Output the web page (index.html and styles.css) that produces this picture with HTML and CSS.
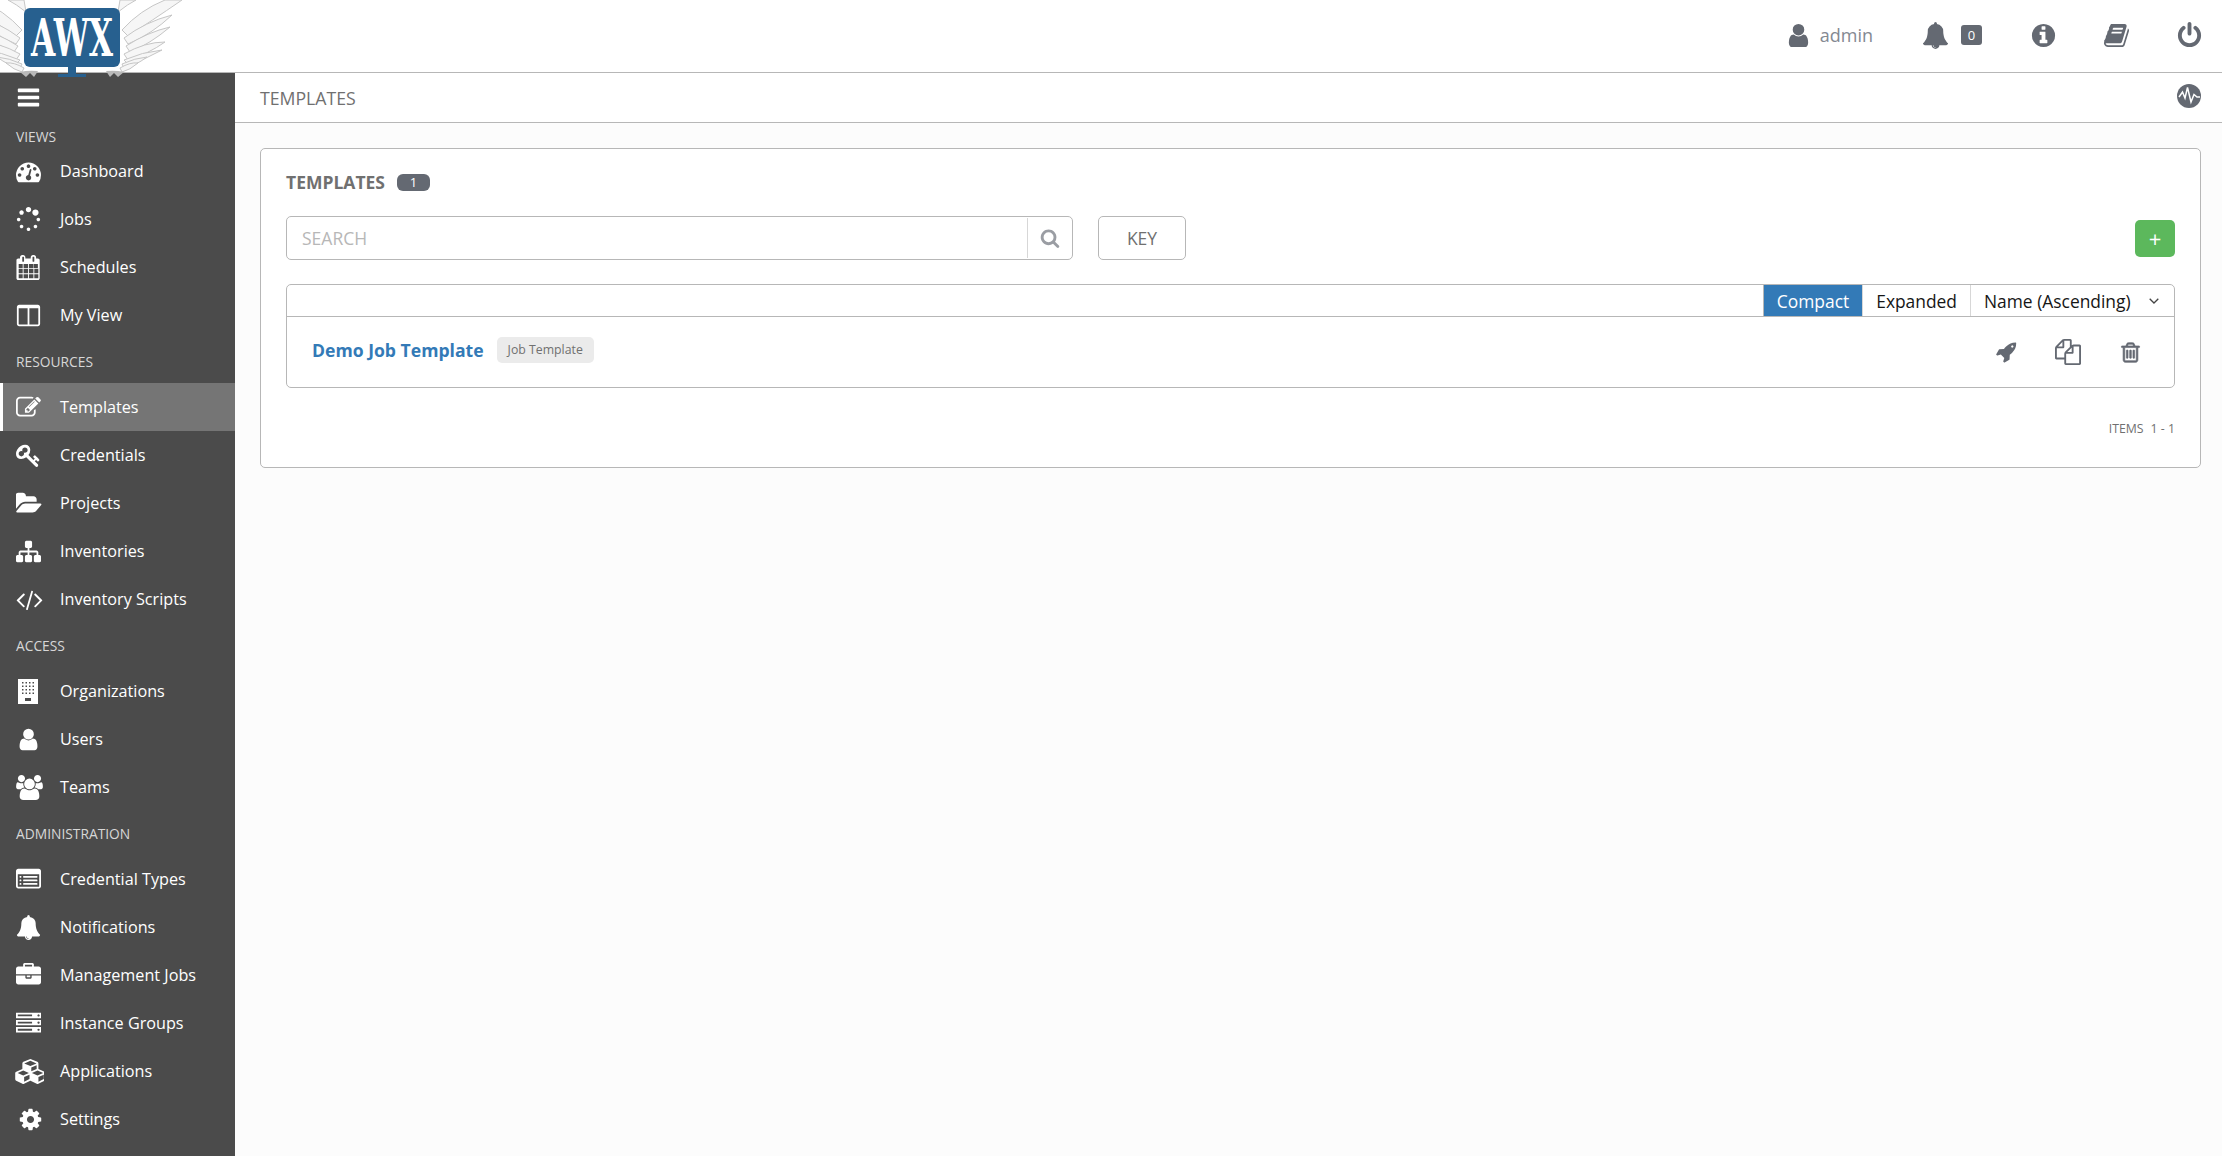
FILE: index.html
```html
<!DOCTYPE html>
<html lang="en">
<head>
<meta charset="utf-8">
<title>AWX Templates</title>
<link rel="stylesheet" href="styles.css">
</head>
<body>
<svg class="logo" viewBox="0 0 190 78" width="190" height="78" aria-label="AWX">
  <defs>
    <g id="wing" fill="#f6f6f6" stroke="#c6c6c6" stroke-width="1">
      <path d="M118 12Q128 4 136 0L120 0Z"/>
      <path d="M122 30Q140 10 165 0L182 0Q150 22 128 36Z"/>
      <path d="M124 38Q145 22 172 15Q152 34 128 44Z"/>
      <path d="M126 46Q148 32 170 27Q150 44 130 52Z"/>
      <path d="M124 54Q145 42 165 42Q148 54 128 60Z"/>
      <path d="M124 60Q142 52 162 50Q145 60 128 64Z"/>
      <path d="M122 64Q135 58 147 57Q135 66 124 68Z"/>
      <path d="M120 68Q130 62 138 63Q130 70 122 72Z"/>
      <path class="wing-tip" d="M106 71Q116 70 124 72L118 77L114 73L110 77Z"/>
    </g>
  </defs>
  <use href="#wing"/>
  <use href="#wing" transform="matrix(-1 0 0 1 144 0)"/>
  <rect x="24" y="8" width="96" height="59" rx="6" fill="#27608f"/>
  <rect x="68" y="66" width="8" height="9" fill="#27608f"/>
  <rect x="58" y="74" width="28" height="3" fill="#27608f"/>
  <text class="logo-text" x="72" y="56" text-anchor="middle" textLength="82" lengthAdjust="spacingAndGlyphs">AWX</text>
</svg>
<header class="topbar">
  <a class="top-item user"><svg class="ic-top" viewBox="0 0 1792 1792"><path d="M1536 1399q0 109-62.5 187t-150.5 78h-854q-88 0-150.5-78t-62.5-187q0-85 8.5-160.5t31.5-152 58.5-131 94-89 134.5-34.5q131 128 313 128t313-128q76 0 134.5 34.5t94 89 58.5 131 31.5 152 8.5 160.5zm-256-887q0 159-112.5 271.5t-271.5 112.5-271.5-112.5-112.5-271.5 112.5-271.5 271.5-112.5 271.5 112.5 112.5 271.5z"/></svg><span>admin</span></a>
  <a class="top-item bell"><svg class="ic-top" viewBox="0 0 1792 1792"><path d="M912 1696q0-16-16-16-59 0-101.5-42.5t-42.5-101.5q0-16-16-16t-16 16q0 73 51.5 124.5t124.5 51.5q16 0 16-16zm816-288q0 52-38 90t-90 38h-448q0 106-75 181t-181 75-181-75-75-181h-448q-52 0-90-38t-38-90q50-42 91-88t85-119.5 74.5-158.5 50-206 19.5-260q0-152 117-282.5t307-158.5q-8-19-8-39 0-40 28-68t68-28 68 28 28 68q0 20-8 39 190 28 307 158.5t117 282.5q0 139 19.5 260t50 206 74.5 158.5 85 119.5 91 88z"/></svg><b class="count">0</b></a>
  <a class="top-item info"><svg class="ic-top" viewBox="0 0 1792 1792"><path d="M1152 1376v-160q0-14-9-23t-23-9h-96v-512q0-14-9-23t-23-9h-320q-14 0-23 9t-9 23v160q0 14 9 23t23 9h96v320h-96q-14 0-23 9t-9 23v160q0 14 9 23t23 9h448q14 0 23-9t9-23zm-128-896v-160q0-14-9-23t-23-9h-192q-14 0-23 9t-9 23v160q0 14 9 23t23 9h192q14 0 23-9t9-23zm640 416q0 209-103 385.5t-279.5 279.5-385.5 103-385.5-103-279.5-279.5-103-385.5 103-385.5 279.5-279.5 385.5-103 385.5 103 279.5 279.5 103 385.5z"/></svg></a>
  <a class="top-item book"><svg class="ic-top" viewBox="0 0 1792 1792"><path d="M1703 478q40 57 18 129l-275 906q-19 64-76.5 107.5t-122.5 43.5h-923q-77 0-148.5-53.5t-99.5-131.5q-24-67-2-127 0-4 3-27t4-37q1-8-3-21.5t-3-19.5q2-11 8-21t16.5-23.5 16.5-23.5q23-38 45-91.5t30-91.5q3-10 .5-30t-.5-28q3-11 17-28t17-23q21-36 42-92t25-90q1-9-2.5-32t.5-28q4-13 22-30.5t22-22.5q19-26 42.5-84.5t27.5-96.5q1-8-3-25.5t-2-26.5q2-8 9-18t18-23 17-21q8-12 16.5-30.5t15-35 16-36 19.5-32 26.5-23.5 36-11.5 47.5 5.5l-1 3q38-9 51-9h761q74 0 114 56t18 130l-274 906q-36 119-71.5 153.5t-128.5 34.5h-869q-27 0-38 15-11 16-1 43 24 70 144 70h923q29 0 56-15.5t35-41.5l300-987q7-22 5-57 38 15 59 43zm-1064 2q-4 13 2 22.5t20 9.5h608q13 0 25.5-9.5t16.5-22.5l21-64q4-13-2-22.5t-20-9.5h-608q-13 0-25.5 9.5t-16.5 22.5zm-83 256q-4 13 2 22.5t20 9.5h608q13 0 25.5-9.5t16.5-22.5l21-64q4-13-2-22.5t-20-9.5h-608q-13 0-25.5 9.5t-16.5 22.5z"/></svg></a>
  <a class="top-item power"><svg class="ic-top" viewBox="0 0 1792 1792"><path d="M1664 896q0 156-61 298t-164 245-245 164-298 61-298-61-245-164-164-245-61-298q0-182 80.5-343t226.5-270q43-32 95.5-25t83.5 50q32 42 24.5 94.5t-49.5 84.5q-98 74-151.5 181t-53.5 228q0 104 40.5 198.5t109.5 163.5 163.5 109.5 198.5 40.5 198.5-40.5 163.5-109.5 109.5-163.5 40.5-198.5q0-121-53.5-228t-151.5-181q-42-32-49.5-84.5t24.5-94.5q31-43 84-50t95 25q146 109 226.5 270t80.5 343zm-640-768v640q0 52-38 90t-90 38-90-38-38-90v-640q0-52 38-90t90-38 90 38 38 90z"/></svg></a>
</header>
<div class="shell">
  <nav class="sidebar">
    <div class="burger"><svg class="ic" viewBox="0 0 1792 1792"><path d="M1664 1344v128q0 26-19 45t-45 19h-1408q-26 0-45-19t-19-45v-128q0-26 19-45t45-19h1408q26 0 45 19t19 45zm0-512v128q0 26-19 45t-45 19h-1408q-26 0-45-19t-19-45v-128q0-26 19-45t45-19h1408q26 0 45 19t19 45zm0-512v128q0 26-19 45t-45 19h-1408q-26 0-45-19t-19-45v-128q0-26 19-45t45-19h1408q26 0 45 19t19 45z"/></svg></div>
    <div class="group-label first">VIEWS</div>
    <a class="nav-item"><span class="nav-icon"><svg class="ic" viewBox="0 0 1792 1792"><path d="M384 1152q0-53-37.5-90.5t-90.5-37.5-90.5 37.5-37.5 90.5 37.5 90.5 90.5 37.5 90.5-37.5 37.5-90.5zm192-448q0-53-37.5-90.5t-90.5-37.5-90.5 37.5-37.5 90.5 37.5 90.5 90.5 37.5 90.5-37.5 37.5-90.5zm428 481l101-382q6-26-7.5-48.5t-38.5-29.5-48 6.5-30 39.5l-101 382q-60 5-107 43.5t-63 98.5q-20 77 20 146t117 89 146-20 89-117q16-60-6-117t-72-91zm660-33q0-53-37.5-90.5t-90.5-37.5-90.5 37.5-37.5 90.5 37.5 90.5 90.5 37.5 90.5-37.5 37.5-90.5zm-640-640q0-53-37.5-90.5t-90.5-37.5-90.5 37.5-37.5 90.5 37.5 90.5 90.5 37.5 90.5-37.5 37.5-90.5zm448 192q0-53-37.5-90.5t-90.5-37.5-90.5 37.5-37.5 90.5 37.5 90.5 90.5 37.5 90.5-37.5 37.5-90.5zm320 448q0 261-141 483-19 29-54 29h-1402q-35 0-54-29-141-221-141-483 0-182 71-348t191-286 286-191 348-71 348 71 286 191 191 286 71 348z"/></svg></span>Dashboard</a>
    <a class="nav-item"><span class="nav-icon"><svg class="ic" viewBox="0 0 1792 1792"><path d="M526 1394q0 53-37.5 90.5t-90.5 37.5q-52 0-90-38t-38-90q0-53 37.5-90.5t90.5-37.5 90.5 37.5 37.5 90.5zm498 206q0 53-37.5 90.5t-90.5 37.5-90.5-37.5-37.5-90.5 37.5-90.5 90.5-37.5 90.5 37.5 37.5 90.5zm-704-704q0 53-37.5 90.5t-90.5 37.5-90.5-37.5-37.5-90.5 37.5-90.5 90.5-37.5 90.5 37.5 37.5 90.5zm1202 498q0 52-38 90t-90 38q-53 0-90.5-37.5t-37.5-90.5 37.5-90.5 90.5-37.5 90.5 37.5 37.5 90.5zm-964-996q0 66-47 113t-113 47-113-47-47-113 47-113 113-47 113 47 47 113zm1170 498q0 53-37.5 90.5t-90.5 37.5-90.5-37.5-37.5-90.5 37.5-90.5 90.5-37.5 90.5 37.5 37.5 90.5zm-640-704q0 80-56 136t-136 56-136-56-56-136 56-136 136-56 136 56 56 136zm530 206q0 93-66 158.5t-158 65.5q-93 0-158.5-65.5t-65.5-158.5q0-92 65.5-158t158.5-66q92 0 158 66t66 158z"/></svg></span>Jobs</a>
    <a class="nav-item"><span class="nav-icon"><svg class="ic" viewBox="0 0 1792 1792"><path d="M192 1664h288v-288h-288v288zm352 0h320v-288h-320v288zm-352-352h288v-320h-288v320zm352 0h320v-320h-320v320zm-352-384h288v-288h-288v288zm736 736h320v-288h-320v288zm-384-736h320v-288h-320v288zm768 736h288v-288h-288v288zm-384-352h320v-320h-320v320zm-352-864v-288q0-13-9.5-22.5t-22.5-9.5h-64q-13 0-22.5 9.5t-9.5 22.5v288q0 13 9.5 22.5t22.5 9.5h64q13 0 22.5-9.5t9.5-22.5zm736 864h288v-320h-288v320zm-384-384h320v-288h-320v288zm352 0h288v-288h-288v288zm32-480v-288q0-13-9.5-22.5t-22.5-9.5h-64q-13 0-22.5 9.5t-9.5 22.5v288q0 13 9.5 22.5t22.5 9.5h64q13 0 22.5-9.5t9.5-22.5zm384-64v1280q0 52-38 90t-90 38h-1408q-52 0-90-38t-38-90v-1280q0-52 38-90t90-38h128v-96q0-66 47-113t113-47h64q66 0 113 47t47 113v96h384v-96q0-66 47-113t113-47h64q66 0 113 47t47 113v96h128q52 0 90 38t38 90z"/></svg></span>Schedules</a>
    <a class="nav-item"><span class="nav-icon"><svg class="ic" viewBox="0 0 1792 1792"><path d="M224 1536h608v-1152h-640v1120q0 13 9.5 22.5t22.5 9.5zm1376-32v-1120h-640v1152h608q13 0 22.5-9.5t9.5-22.5zm128-1216v1216q0 66-47 113t-113 47h-1344q-66 0-113-47t-47-113v-1216q0-66 47-113t113-47h1344q66 0 113 47t47 113z"/></svg></span>My View</a>
    <div class="group-label">RESOURCES</div>
    <a class="nav-item active"><span class="nav-icon"><svg class="ic" viewBox="0 0 1792 1792"><path d="M888 1184l116-116-152-152-116 116v56h96v96h56zm440-720q-16-16-33 1l-350 350q-17 17-1 33t33-1l350-350q17-17 1-33zm80 594v190q0 119-84.5 203.5t-203.5 84.5h-832q-119 0-203.5-84.5t-84.5-203.5v-832q0-119 84.5-203.5t203.5-84.5h832q63 0 117 25 15 7 18 23 3 17-9 29l-49 49q-14 14-32 8-23-6-45-6h-832q-66 0-113 47t-47 113v832q0 66 47 113t113 47h832q66 0 113-47t47-113v-126q0-13 9-22l64-64q15-15 35-7t20 29zm-96-738l288 288-672 672h-288v-288zm444 132l-92 92-288-288 92-92q28-28 68-28t68 28l152 152q28 28 28 68t-28 68z"/></svg></span>Templates</a>
    <a class="nav-item"><span class="nav-icon"><svg class="ic" viewBox="0 0 1792 1792"><path d="M832 512q0-80-56-136t-136-56-136 56-56 136q0 42 19 83-41-19-83-19-80 0-136 56t-56 136 56 136 136 56 136-56 56-136q0-42-19-83 41 19 83 19 80 0 136-56t56-136zm851 704q0 17-49 66t-66 49q-9 0-28.5-16t-36.5-33-38.5-40-24.5-26l-96 96 220 220q28 28 28 68 0 42-39 81t-81 39q-40 0-68-28l-671-671q-176 131-365 131-163 0-265.5-102.5t-102.5-265.5q0-160 95-313t248-248 313-95q163 0 265.5 102.5t102.5 265.5q0 189-131 365l355 355 96-96q-3-3-26-24.5t-40-38.5-33-36.5-16-28.5q0-17 49-66t66-49q13 0 23 10 6 6 46 44.5t82 79.5 86.5 86 73 78 28.5 41z"/></svg></span>Credentials</a>
    <a class="nav-item"><span class="nav-icon"><svg class="ic w1920" viewBox="0 0 1920 1792"><path d="M1815 952q0 31-31 66l-336 396q-43 51-120.5 86.5t-143.5 35.5h-1088q-34 0-60.5-13t-26.5-43q0-31 31-66l336-396q43-51 120.5-86.5t143.5-35.5h1088q34 0 60.5 13t26.5 43zm-343-344v160h-832q-94 0-197 47.5t-164 119.5l-337 396-5 6q0-4-.5-12.5t-.5-12.5v-960q0-92 66-158t158-66h320q92 0 158 66t66 158v32h544q92 0 158 66t66 158z"/></svg></span>Projects</a>
    <a class="nav-item"><span class="nav-icon"><svg class="ic" viewBox="0 0 1792 1792"><path d="M1792 1248v320q0 40-28 68t-68 28h-320q-40 0-68-28t-28-68v-320q0-40 28-68t68-28h96v-192h-512v192h96q40 0 68 28t28 68v320q0 40-28 68t-68 28h-320q-40 0-68-28t-28-68v-320q0-40 28-68t68-28h96v-192h-512v192h96q40 0 68 28t28 68v320q0 40-28 68t-68 28h-320q-40 0-68-28t-28-68v-320q0-40 28-68t68-28h96v-192q0-52 38-90t90-38h512v-192h-96q-40 0-68-28t-28-68v-320q0-40 28-68t68-28h320q40 0 68 28t28 68v320q0 40-28 68t-68 28h-96v192h512q52 0 90 38t38 90v192h96q40 0 68 28t28 68z"/></svg></span>Inventories</a>
    <a class="nav-item"><span class="nav-icon"><svg class="ic w1920" viewBox="0 0 1920 1792"><path d="M617 1399l-50 50q-10 10-23 10t-23-10l-466-466q-10-10-10-23t10-23l466-466q10-10 23-10t23 10l50 50q10 10 10 23t-10 23l-393 393 393 393q10 10 10 23t-10 23zm591-1067l-373 1291q-4 13-15.5 19.5t-23.5 2.5l-62-17q-13-4-19.5-15.5t-2.5-24.5l373-1291q4-13 15.5-19.5t23.5-2.5l62 17q13 4 19.5 15.5t2.5 24.5zm657 651l-466 466q-10 10-23 10t-23-10l-50-50q-10-10-10-23t10-23l393-393-393-393q-10-10-10-23t10-23l50-50q10-10 23-10t23 10l466 466q10 10 10 23t-10 23z"/></svg></span>Inventory Scripts</a>
    <div class="group-label">ACCESS</div>
    <a class="nav-item"><span class="nav-icon"><svg class="ic building" viewBox="0 0 20 25"><path fill-rule="evenodd" d="M0 0h20v25H0zM4 3v1.5h1.5V3zM7.5 3v1.5H9V3zM11 3v1.5h1.5V3zM14.500 3v1.500H16V3zM4 6.500V8h1.500V6.500zM7.500 6.500V8H9V6.500zM11 6.500V8h1.500V6.500zM14.500 6.500V8H16V6.500zM4 10v1.500h1.500V10zM7.500 10v1.500H9V10zM11 10v1.500h1.500V10zM14.500 10v1.500H16V10zM4 13.500V15h1.500v-1.500zM7.500 13.500V15H9v-1.500zM11 13.500V15h1.500v-1.500zM14.500 13.500V15H16v-1.500zM7 19v3h6v-3z"/></svg></span>Organizations</a>
    <a class="nav-item"><span class="nav-icon"><svg class="ic" viewBox="0 0 1792 1792"><path d="M1536 1399q0 109-62.5 187t-150.5 78h-854q-88 0-150.5-78t-62.5-187q0-85 8.500-160.500t31.500-152 58.500-131 94-89 134.500-34.500q131 128 313 128t313-128q76 0 134.500 34.500t94 89 58.500 131 31.500 152 8.500 160.500zm-256-887q0 159-112.500 271.500t-271.500 112.500-271.500-112.500-112.500-271.500 112.500-271.500 271.500-112.500 271.500 112.500 112.500 271.500z"/></svg></span>Users</a>
    <a class="nav-item"><span class="nav-icon"><svg class="ic w1920" viewBox="0 0 1920 1792"><path d="M593 896q-162 5-265 128h-134q-82 0-138-40.500t-56-118.500q0-353 124-353 6 0 43.500 21t97.500 42.500 119 21.500q67 0 133-23-5 37-5 66 0 139 81 256zm1071 637q0 120-73 189.500t-194 69.500h-874q-121 0-194-69.500t-73-189.500q0-53 3.500-103.500t14-109 26.500-108.500 43-97.500 62-81 85.500-53.500 111.500-20q10 0 43 21.500t73 48 107 48 135 21.500 135-21.500 107-48 73-48 43-21.500q61 0 111.500 20t85.500 53.500 62 81 43 97.500 26.500 108.500 14 109 3.500 103.500zm-1024-1277q0 106-75 181t-181 75-181-75-75-181 75-181 181-75 181 75 75 181zm704 384q0 159-112.500 271.500t-271.500 112.500-271.500-112.500-112.500-271.500 112.500-271.500 271.500-112.500 271.500 112.500 112.500 271.500zm576 225q0 78-56 118.500t-138 40.500h-134q-103-123-265-128 81-117 81-256 0-29-5-66 66 23 133 23 59 0 119-21.500t97.500-42.500 43.500-21q124 0 124 353zm-128-609q0 106-75 181t-181 75-181-75-75-181 75-181 181-75 181 75 75 181z"/></svg></span>Teams</a>
    <div class="group-label">ADMINISTRATION</div>
    <a class="nav-item"><span class="nav-icon"><svg class="ic" viewBox="0 0 1792 1792"><path d="M384 1184v64q0 13-9.500 22.500t-22.500 9.500h-64q-13 0-22.500-9.500t-9.500-22.500v-64q0-13 9.500-22.500t22.500-9.500h64q13 0 22.500 9.500t9.500 22.500zm0-256v64q0 13-9.500 22.500t-22.500 9.500h-64q-13 0-22.500-9.500t-9.500-22.500v-64q0-13 9.500-22.500t22.500-9.500h64q13 0 22.500 9.500t9.500 22.500zm0-256v64q0 13-9.500 22.500t-22.500 9.500h-64q-13 0-22.500-9.500t-9.500-22.500v-64q0-13 9.500-22.500t22.500-9.500h64q13 0 22.500 9.500t9.500 22.500zm1152 512v64q0 13-9.500 22.500t-22.500 9.500h-960q-13 0-22.500-9.500t-9.500-22.500v-64q0-13 9.500-22.500t22.500-9.500h960q13 0 22.500 9.500t9.500 22.500zm0-256v64q0 13-9.500 22.500t-22.500 9.500h-960q-13 0-22.500-9.500t-9.500-22.500v-64q0-13 9.500-22.500t22.500-9.500h960q13 0 22.500 9.500t9.500 22.500zm0-256v64q0 13-9.500 22.500t-22.500 9.500h-960q-13 0-22.500-9.500t-9.500-22.500v-64q0-13 9.500-22.500t22.500-9.500h960q13 0 22.500 9.500t9.500 22.500zm128 704v-832q0-13-9.500-22.500t-22.500-9.500h-1472q-13 0-22.500 9.500t-9.500 22.500v832q0 13 9.500 22.500t22.500 9.500h1472q13 0 22.500-9.500t9.500-22.500zm128-1088v1088q0 66-47 113t-113 47h-1472q-66 0-113-47t-47-113v-1088q0-66 47-113t113-47h1472q66 0 113 47t47 113z"/></svg></span>Credential Types</a>
    <a class="nav-item"><span class="nav-icon"><svg class="ic" viewBox="0 0 1792 1792"><path d="M912 1696q0-16-16-16-59 0-101.500-42.500t-42.500-101.500q0-16-16-16t-16 16q0 73 51.500 124.500t124.500 51.500q16 0 16-16zm816-288q0 52-38 90t-90 38h-448q0 106-75 181t-181 75-181-75-75-181h-448q-52 0-90-38t-38-90q50-42 91-88t85-119.500 74.500-158.500 50-206 19.500-260q0-152 117-282.500t307-158.500q-8-19-8-39 0-40 28-68t68-28 68 28 28 68q0 20-8 39 190 28 307 158.500t117 282.500q0 139 19.500 260t50 206 74.500 158.500 85 119.500 91 88z"/></svg></span>Notifications</a>
    <a class="nav-item"><span class="nav-icon"><svg class="ic" viewBox="0 0 1792 1792"><path d="M640 256h512v-128h-512v128zm1152 640v480q0 66-47 113t-113 47h-1472q-66 0-113-47t-47-113v-480h672v160q0 26 19 45t45 19h320q26 0 45-19t19-45v-160h672zm-768 0v128h-256v-128h256zm768-480v384h-1792v-384q0-66 47-113t113-47h352v-160q0-40 28-68t68-28h576q40 0 68 28t28 68v160h352q66 0 113 47t47 113z"/></svg></span>Management Jobs</a>
    <a class="nav-item"><span class="nav-icon"><svg class="ic" viewBox="0 0 1792 1792"><path d="M128 1408h1024v-128h-1024v128zm0-512h1024v-128h-1024v128zm1568 448q0-33-23.500-56.500t-56.500-23.500-56.500 23.500-23.500 56.500 23.500 56.500 56.500 23.500 56.500-23.500 23.500-56.500zm-1568-960h1024v-128h-1024v128zm1568 448q0-33-23.500-56.500t-56.500-23.500-56.500 23.500-23.500 56.500 23.500 56.500 56.500 23.500 56.500-23.500 23.500-56.500zm0-512q0-33-23.500-56.500t-56.500-23.500-56.500 23.500-23.500 56.500 23.500 56.500 56.500 23.500 56.500-23.500 23.500-56.500zm96 832v384h-1792v-384h1792zm0-512v384h-1792v-384h1792zm0-512v384h-1792v-384h1792z"/></svg></span>Instance Groups</a>
    <a class="nav-item"><span class="nav-icon"><svg class="ic w2048" viewBox="0 0 2048 1792"><path d="M640 1632l384-192v-314l-384 164v342zm-64-454l404-173-404-173-404 173zm1088 454l384-192v-314l-384 164v342zm-64-454l404-173-404-173-404 173zm-448-293l384-165v-266l-384 164v267zm-64-379l441-189-441-189-441 189zm1088 518v416q0 36-19 67t-52 47l-448 224q-25 14-57 14t-57-14l-448-224q-4-2-7-4-2 2-7 4l-448 224q-25 14-57 14t-57-14l-448-224q-33-16-52-47t-19-67v-416q0-38 21.500-70t56.500-48l434-186v-400q0-38 21.500-70t56.500-48l448-192q23-10 50-10t50 10l448 192q35 16 56.500 48t21.500 70v400l434 186q36 16 57 48t21 70z"/></svg></span>Applications</a>
    <a class="nav-item"><span class="nav-icon"><svg class="ic cog" viewBox="0 0 1792 1792"><path d="M1152 896q0-106-75-181t-181-75-181 75-75 181 75 181 181 75 181-75 75-181zm512-109v222q0 12-8 23t-20 13l-185 28q-19 54-39 91 35 50 107 138 10 12 10 25t-9 23q-27 37-99 108t-94 71q-12 0-26-9l-138-108q-44 23-91 38-16 136-29 186-7 28-36 28h-222q-14 0-24.500-8.500t-11.500-21.500l-28-184q-49-16-90-37l-141 107q-10 9-25 9-14 0-25-11-126-114-165-168-7-10-7-23 0-12 8-23 15-21 51-66.500t54-70.500q-27-50-41-99l-183-27q-13-2-21-12.500t-8-23.500v-222q0-12 8-23t19-13l186-28q14-46 39-92-40-57-107-138-10-12-10-24 0-10 9-23 26-36 98.500-107.500t94.500-71.500q13 0 26 10l138 107q44-23 91-38 16-136 29-186 7-28 36-28h222q14 0 24.500 8.500t11.500 21.500l28 184q49 16 90 37l142-107q9-9 24-9 13 0 25 10 129 119 165 170 7 8 7 22 0 12-8 23-15 21-51 66.500t-54 70.500q26 50 41 98l183 28q13 2 21 12.500t8 23.500z"/></svg></span>Settings</a>
  </nav>
  <main class="main">
    <div class="subheader">
      <span class="crumb">TEMPLATES</span>
      <svg class="activity" viewBox="0 0 24 24"><circle cx="12" cy="12" r="12"/><path d="M2 13L5.500 8l2.500 6 2.500-10.500L14 18l3-7.500 3 2.500h3"/></svg>
    </div>
    <div class="content">
      <section class="card">
        <div class="card-title"><span>TEMPLATES</span><b class="pill">1</b></div>
        <div class="toolbar">
          <div class="search">
            <input class="search-input" type="text" placeholder="SEARCH">
            <span class="search-btn"><svg viewBox="0 0 1792 1792"><path d="M1216 832q0-185-131.500-316.500t-316.500-131.500-316.500 131.500-131.500 316.500 131.500 316.500 316.500 131.500 316.500-131.500 131.500-316.500zm512 832q0 52-38 90t-90 38q-54 0-90-38l-343-342q-179 124-399 124-143 0-273.500-55.500t-225-150-150-225-55.500-273.500 55.500-273.500 150-225 225-150 273.500-55.500 273.500 55.500 225 150 150 225 55.500 273.500q0 220-124 399l343 343q37 37 37 90z"/></svg></span>
          </div>
          <button class="key-btn">KEY</button>
          <button class="add-btn">+</button>
        </div>
        <div class="list">
          <div class="list-head">
            <span class="toggle on">Compact</span>
            <span class="toggle">Expanded</span>
            <span class="sort">Name (Ascending)<svg viewBox="0 0 10 6"><path d="M.7.7 5 5 9.300.7"/></svg></span>
          </div>
          <div class="list-row">
            <a class="row-name">Demo Job Template</a>
            <span class="tag">Job Template</span>
            <span class="row-actions">
              <svg class="act rocket" viewBox="0 0 1792 1792"><path d="M1504 448q0-40-28-68t-68-28-68 28-28 68 28 68 68 28 68-28 28-68zm224-288q0 249-75.500 430.500t-253.500 360.500q-81 80-195 176l-20 379q-2 16-16 26l-384 224q-7 4-16 4-12 0-23-9l-64-64q-13-14-8-32l85-276-281-281-276 85q-3 1-9 1-14 0-23-9l-64-64q-17-19-5-39l224-384q10-14 26-16l379-20q96-114 176-195 188-187 358-258t431-71q14 0 24 9.500t10 22.500z"/></svg>
              <svg class="act files" viewBox="0 0 1792 1792"><path d="M1696 384q40 0 68 28t28 68v1216q0 40-28 68t-68 28h-960q-40 0-68-28t-28-68v-288h-544q-40 0-68-28t-28-68v-672q0-40 20-88t48-76l408-408q28-28 76-48t88-20h416q40 0 68 28t28 68v328q68-40 128-40h416zm-544 213l-299 299h299v-299zm-640-384l-299 299h299v-299zm196 647l316-316v-416h-384v416q0 40-28 68t-68 28h-416v640h512v-256q0-40 20-88t48-76zm956 804v-1152h-384v416q0 40-28 68t-68 28h-416v640h896z"/></svg>
              <svg class="act trash" viewBox="0 0 1792 1792"><path d="M704 736v576q0 14-9 23t-23 9h-64q-14 0-23-9t-9-23v-576q0-14 9-23t23-9h64q14 0 23 9t9 23zm256 0v576q0 14-9 23t-23 9h-64q-14 0-23-9t-9-23v-576q0-14 9-23t23-9h64q14 0 23 9t9 23zm256 0v576q0 14-9 23t-23 9h-64q-14 0-23-9t-9-23v-576q0-14 9-23t23-9h64q14 0 23 9t9 23zm128 724v-948h-896v948q0 22 7 40.500t14.500 27 10.500 8.500h832q3 0 10.500-8.500t14.500-27 7-40.500zm-672-1076h448l-48-117q-7-9-17-11h-317q-10 2-17 11zm928 32v64q0 14-9 23t-23 9h-96v948q0 83-47 143.500t-113 60.500h-832q-66 0-113-58.500t-47-141.500v-952h-96q-14 0-23-9t-9-23v-64q0-14 9-23t23-9h309l70-167q15-37 54-63t79-26h320q40 0 79 26t54 63l70 167h309q14 0 23 9t9 23z"/></svg>
            </span>
          </div>
        </div>
        <div class="pager"><span>ITEMS</span><span>1 - 1</span></div>
      </section>
    </div>
  </main>
</div>
</body>
</html>
```

FILE: styles.css
```css
* { box-sizing: border-box; }
html, body { margin: 0; height: 100%; }
body {
  display: flex;
  flex-direction: column;
  height: 1156px;
  overflow: hidden;
  font-family: "Open Sans", "Liberation Sans", sans-serif;
  background: #fcfcfc;
  color: #707070;
}
.logo { position: absolute; left: 0; top: 0; z-index: 3; }
.logo-text {
  font-family: "DejaVu Serif", serif;
  font-weight: 700;
  font-size: 53px;
  fill: #fff;
}
.wing-tip { fill: #b9b9b9; stroke: none; }
.topbar {
  height: 73px;
  flex: none;
  background: #fff;
  border-bottom: 1px solid #b7b7b7;
  display: flex;
  align-items: center;
  justify-content: flex-end;
  padding: 0 19px 2px 0;
}
.top-item { display: flex; align-items: center; }
.ic-top { width: 27px; height: 27px; fill: #646972; display: block; }
.user { font-size: 18px; color: #848992; margin-right: 49px; }
.user span { margin-left: 8px; }
.count {
  width: 21px;
  height: 20px;
  margin-left: 12px;
  border-radius: 3px;
  background: #646972;
  color: #fff;
  font-size: 13px;
  font-weight: 400;
  text-align: center;
  line-height: 20px;
}
.bell { margin-right: 48px; }
.info { margin-right: 46px; }
.book { margin-right: 46px; }
.shell { display: flex; flex: 1; min-height: 0; }
.sidebar {
  width: 235px;
  flex: none;
  background: #4b4b4b;
  color: #fff;
  display: flex;
  flex-direction: column;
}
.ic { display: block; width: 25px; height: 25px; fill: #fff; }
.ic.w1920 { width: 27px; }
.ic.w2048 { width: 29px; margin-left: -1px; }
.ic.cog { margin-left: 2px; }
.ic.building { width: 20px; margin-left: 2px; }
.burger { height: 48px; padding: 12px 0 0 16px; }
.group-label {
  height: 44px;
  padding: 13px 0 0 16px;
  font-size: 13.8px;
  line-height: 20px;
  color: #d7d7d7;
}
.group-label.first { height: 26px; padding-top: 6px; }
.nav-item {
  height: 48px;
  display: flex;
  align-items: center;
  padding-left: 16px;
  font-size: 16.2px;
}
.nav-icon { width: 44px; flex: none; }
.nav-item.active {
  background: #757575;
  border-left: 3px solid #fff;
  padding-left: 13px;
}
.main { flex: 1; min-width: 0; display: flex; flex-direction: column; }
.subheader {
  height: 50px;
  flex: none;
  background: #fff;
  border-bottom: 1px solid #b7b7b7;
  display: flex;
  align-items: center;
  justify-content: space-between;
  padding: 0 21px 0 25px;
  font-size: 17.7px;
}
.activity { width: 24px; height: 24px; margin-bottom: 3px; }
.activity circle { fill: #646972; }
.activity path { fill: none; stroke: #fff; stroke-width: 1.5; }
.content { padding: 25px 21px 0 25px; }
.card {
  background: #fff;
  border: 1px solid #b7b7b7;
  border-radius: 5px;
  padding: 20px 25px 28px;
}
.card-title {
  height: 26px;
  display: flex;
  align-items: center;
  font-size: 17.5px;
  font-weight: 700;
}
.pill {
  width: 33px;
  height: 17px;
  margin-left: 12px;
  border-radius: 6px;
  background: #646972;
  color: #fff;
  font-size: 13px;
  font-weight: 400;
  line-height: 17px;
  text-align: center;
}
.toolbar { margin-top: 21px; height: 44px; display: flex; align-items: center; }
.search {
  width: 787px;
  height: 44px;
  display: flex;
  border: 1px solid #b7b7b7;
  border-radius: 5px;
}
.search-input {
  flex: 1;
  min-width: 0;
  border: 0;
  outline: 0;
  background: transparent;
  padding: 0 15px;
  font: 17.5px "Open Sans", sans-serif;
  color: #707070;
}
.search-input::placeholder { color: #b7b7b7; opacity: 1; }
.search-btn {
  width: 45px;
  border-left: 1px solid #d7d7d7;
  margin: 1px 0;
  display: flex;
  align-items: center;
  justify-content: center;
}
.search-btn svg { width: 20px; height: 20px; fill: #9a9da3; }
.key-btn {
  width: 88px;
  height: 44px;
  margin-left: 25px;
  border: 1px solid #b7b7b7;
  border-radius: 5px;
  background: #fff;
  color: #707070;
  font: 17.5px "Open Sans", sans-serif;
  padding: 0;
}
.add-btn {
  width: 40px;
  height: 37px;
  margin-left: auto;
  border: 0;
  border-radius: 5px;
  background: #5cb85c;
  color: #fff;
  font: 22px/37px "Open Sans", sans-serif;
  padding: 0;
}
.list {
  margin-top: 24px;
  height: 104px;
  border: 1px solid #b7b7b7;
  border-radius: 5px;
}
.list-head {
  height: 32px;
  border-bottom: 1px solid #b7b7b7;
  display: flex;
  justify-content: flex-end;
  font-size: 17.4px;
  line-height: 32px;
  color: #161616;
}
.toggle { padding: 0 13px; border-left: 1px solid #d7d7d7; }
.toggle.on { background: #337ab7; color: #fff; border-left-color: #b7b7b7; }
.sort {
  width: 204px;
  padding-left: 13px;
  border-left: 1px solid #d7d7d7;
  display: flex;
  align-items: center;
}
.sort svg { width: 10px; height: 6px; margin-left: 18px; fill: none; stroke: #444; stroke-width: 1.3; }
.list-row { height: 70px; display: flex; align-items: center; padding-left: 25px; }
.row-name { color: #337ab7; font-size: 17.6px; font-weight: 700; margin-bottom: 5px; }
.tag {
  height: 26px;
  margin: 0 0 5px 13px;
  padding: 0 11px;
  border-radius: 5px;
  background: #ebebeb;
  font-size: 12.3px;
  line-height: 25px;
  color: #707070;
}
.row-actions { margin-left: auto; display: flex; align-items: center; }
.act { display: block; fill: #646972; }
.rocket { width: 22px; height: 22px; margin-right: 38px; }
.files { width: 26px; height: 26px; margin-right: 38px; }
.trash { width: 23px; height: 23px; margin-right: 32px; stroke: #646972; stroke-width: 50; }
.pager {
  margin-top: 31px;
  height: 20px;
  display: flex;
  justify-content: flex-end;
  gap: 7px;
  font-size: 12.3px;
  line-height: 20px;
}
```
